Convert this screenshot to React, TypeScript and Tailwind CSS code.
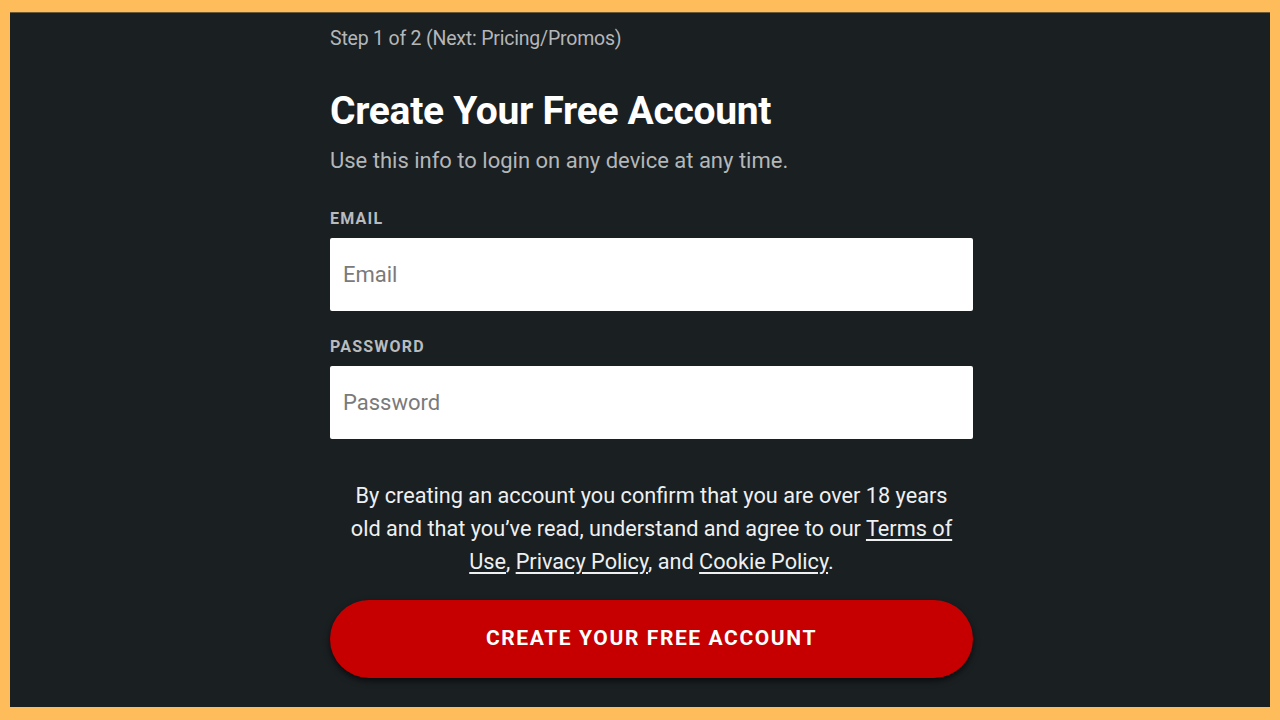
export default function App() {
  return (
    <div className="h-[720px] w-[1280px] bg-[#ffbc5a] pt-[12px] pl-[10px] pr-[10px] pb-[13px] overflow-hidden" style={{ fontFamily: "Roboto, 'Liberation Sans', sans-serif" }}>
      <div className="h-[695px] bg-[#1a1f22] border-t border-[#6b5a3a]">
        <div className="ml-[320px] w-[643px] pt-[14px]">
          <p className="text-[19.5px] leading-[24px] text-[#b4b7b9] tracking-[-0.2px]">Step 1 of 2 (Next: Pricing/Promos)</p>

          <h1 className="mt-[37px] text-[39px] leading-[46px] font-bold text-white tracking-[-0.3px]">Create Your Free Account</h1>
          <p className="mt-[13px] text-[22px] leading-[28px] text-[#b4b7b9]">Use this info to login on any device at any time.</p>

          <label className="block mt-[34px] text-[16px] leading-[20px] font-bold tracking-[1.2px] text-[#b9bcbe]">EMAIL</label>
          <input
            type="email"
            placeholder="Email"
            className="mt-[9px] block w-full h-[73px] rounded-[2px] bg-white px-[13px] text-[22px] text-[#333] placeholder:text-[#7a7a7a] outline-none"
          />

          <label className="block mt-[26px] text-[16px] leading-[20px] font-bold tracking-[1.2px] text-[#b9bcbe]">PASSWORD</label>
          <input
            type="password"
            placeholder="Password"
            className="mt-[9px] block w-full h-[73px] rounded-[2px] bg-white px-[13px] text-[22px] text-[#333] placeholder:text-[#7a7a7a] outline-none"
          />

          <p className="mt-[40px] px-[18px] text-center text-[21.7px] leading-[33px] text-[#eef0f1]">
            By creating an account you confirm that you are over 18 years old and that you’ve read, understand and agree to our{" "}
            <a href="#" className="underline underline-offset-[3px]">Terms of Use</a>,{" "}
            <a href="#" className="underline underline-offset-[3px]">Privacy Policy</a>, and{" "}
            <a href="#" className="underline underline-offset-[3px]">Cookie Policy</a>.
          </p>

          <button className="mt-[22px] w-full h-[78px] rounded-full bg-[#c60000] text-white text-[21px] font-bold tracking-[1.6px] shadow-[0_3px_6px_rgba(0,0,0,0.6)]">
            CREATE YOUR FREE ACCOUNT
          </button>
        </div>
      </div>
    </div>
  );
}
